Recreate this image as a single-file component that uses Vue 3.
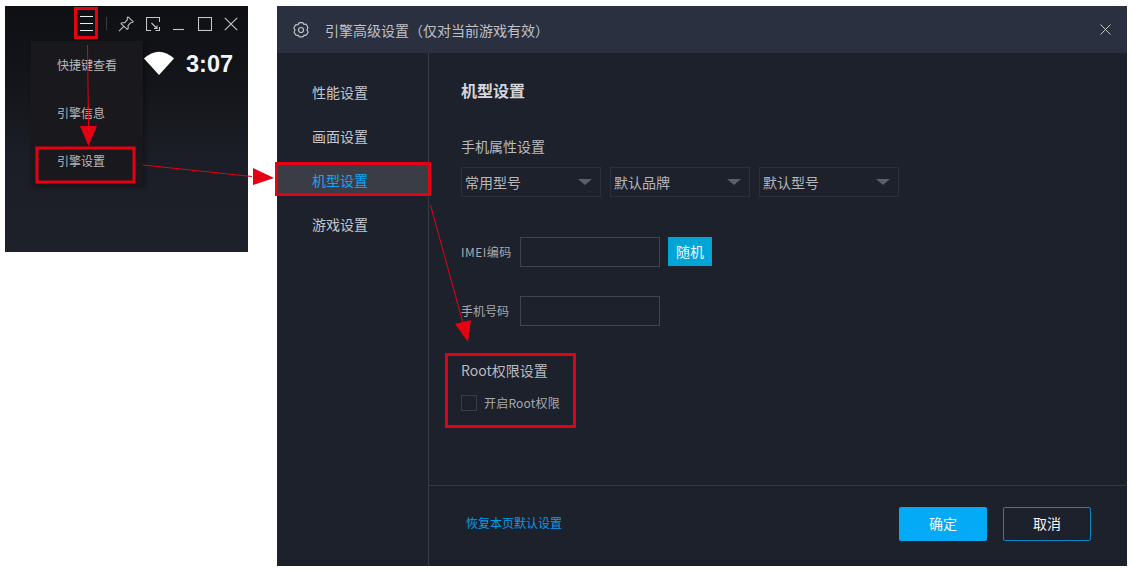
<script setup>
const navItems = ['性能设置', '画面设置', '机型设置', '游戏设置']
const selects = ['常用型号', '默认品牌', '默认型号']
const menu = ['快捷键查看', '引擎信息', '引擎设置']
</script>

<template>
  <div class="page">
    <section class="phone">
      <div class="toolbar">
        <div class="burger"><i></i><i></i><i></i></div>
        <span class="sep"></span>
        <svg class="ti pin" width="16" height="16" viewBox="0 0 16 16" fill="none" stroke="#bfc1c5" stroke-width="1.100" stroke-linejoin="round">
          <path d="M10 .8l5.200 4.800-.7.900-1.800.2-2.600 3 .1 2.700-1 1L3 7.600l1-.9 2.800-.1 2.600-3L9.200 1.700z" />
          <path d="M5.800 10.300L1 15.200" />
        </svg>
        <svg class="ti rs" width="14" height="14" viewBox="0 0 14 14" fill="none" stroke="#c4c6ca" stroke-width="1.100">
          <path d="M13.500 5V.5H.5v13h4.500 M9.500 13.500h4V10" />
          <path d="M5.500 6L11 11.500M11 8.500v3H8" />
        </svg>
        <svg class="ti mn" width="11" height="14" viewBox="0 0 11 14" fill="none" stroke="#c4c6ca" stroke-width="1.100">
          <path d="M0 12.500h11" />
        </svg>
        <svg class="ti mx" width="14" height="14" viewBox="0 0 14 14" fill="none" stroke="#c4c6ca" stroke-width="1.100">
          <rect x=".5" y=".5" width="13" height="13" />
        </svg>
        <svg class="ti" width="14" height="14" viewBox="0 0 14 14" fill="none" stroke="#c4c6ca" stroke-width="1.100">
          <path d="M.8.800l12.400 12.400M13.200.800L.8 13.200" />
        </svg>
      </div>
      <div class="phone-body">
        <ul class="menu">
          <li v-for="m in menu" :key="m">{{ m }}</li>
        </ul>
        <div class="status">
          <svg width="30" height="24" viewBox="0 0 30 24"><path d="M0 7.500Q15-6 30 7.500L15 24z" fill="#fff" /></svg>
          <span class="clock">3:07</span>
        </div>
      </div>
    </section>

    <section class="dialog">
      <header class="head">
        <svg width="18" height="18" viewBox="0 0 18 18" fill="none" stroke="#c3c5ca" stroke-width="1.200" stroke-linejoin="round">
          <path d="M6.600 2.500Q7 1.600 8 1.600h2q1 0 1.400.9l.4.800 1.300-.1q1-.1 1.500.8l1 1.800q.5.800-.1 1.600L15 9l.7 1.100q.6.800.1 1.600l-1 1.800q-.5.900-1.500.8l-1.300-.1-.4.800q-.4.900-1.400.9H8q-1 0-1.400-.9l-.4-.8-1.300.1q-1 .1-1.500-.8l-1-1.800q-.5-.8.100-1.600L3 9l-.7-1.100q-.6-.8-.1-1.600l1-1.800q.5-.9 1.500-.8l1.300.1z" />
          <circle cx="9" cy="9" r="2.500" />
        </svg>
        <span class="title">引擎高级设置（仅对当前游戏有效）</span>
        <svg class="x" width="11" height="11" viewBox="0 0 11 11" fill="none" stroke="#c3c5ca" stroke-width="1">
          <path d="M.5.500l10 10M10.500.500l-10 10" />
        </svg>
      </header>
      <div class="cols">
        <nav class="nav">
          <a v-for="n in navItems" :key="n" :class="{ active: n === '机型设置' }">{{ n }}</a>
        </nav>
        <div class="main">
          <div class="content">
            <h2>机型设置</h2>
            <h3>手机属性设置</h3>
            <div class="selects">
              <div v-for="s in selects" :key="s" class="select">
                <span>{{ s }}</span><b class="caret"></b>
              </div>
            </div>
            <div class="field first">
              <label class="imei">IMEI编码</label><span class="input"></span><button class="random">随机</button>
            </div>
            <div class="field second">
              <label>手机号码</label><span class="input"></span>
            </div>
            <h3 class="root">Root权限设置</h3>
            <div class="check"><span class="box"></span><span>开启Root权限</span></div>
          </div>
          <footer class="foot">
            <a class="reset">恢复本页默认设置</a>
            <button class="ok">确定</button>
            <button class="cancel">取消</button>
          </footer>
        </div>
      </div>
    </section>

    <svg class="marks" width="1132" height="571" viewBox="0 0 1132 571" fill="none" stroke="#e60014">
      <g stroke-width="3">
        <rect x="75.500" y="8.500" width="21" height="29" />
        <rect x="37" y="148" width="97" height="34" />
        <rect x="276.500" y="163.500" width="153" height="31" />
        <rect x="446.500" y="354.500" width="128" height="72" />
      </g>
      <g stroke-width="1">
        <path d="M87.500 45L88.500 126" />
        <path d="M143 165L252 176.500" />
        <path d="M430.500 205L463 323" />
      </g>
      <g fill="#e60014" stroke="none">
        <path d="M80 126H97L88.500 146z" />
        <path d="M253 168L274 178 253 185z" />
        <path d="M455 324L471 320 468 342z" />
      </g>
    </svg>
  </div>
</template>

<style scoped>
.page {
  position: relative;
  width: 1132px;
  height: 571px;
  box-sizing: border-box;
  padding: 6px 0 0 5px;
  display: flex;
  align-items: flex-start;
  gap: 29px;
  overflow: hidden;
  background: #fff;
  font-family: "Noto Sans CJK SC", "Liberation Sans", sans-serif;
}
.phone {
  width: 243px;
  height: 246px;
  flex: none;
  display: flex;
  flex-direction: column;
  background: linear-gradient(180deg, #0f1014 0%, #14151a 32%, #1b1e26 62%, #1e212a 100%);
}
.toolbar {
  height: 35px;
  padding-left: 70px;
  display: flex;
  align-items: center;
}
.burger {
  width: 13px;
  margin: 0 5px;
  display: flex;
  flex-direction: column;
  gap: 6px;
}
.burger i { display: block; height: 1px; background: #eceef0; }
.sep { width: 1px; height: 13px; margin: 0 11px 0 8px; background: #3a3c42; }
.ti { flex: none; }
.pin { margin-right: 12px; }
.rs { margin-right: 13px; }
.mn { margin-right: 14px; }
.mx { margin-right: 12px; }
.phone-body { display: flex; align-items: flex-start; padding-left: 26px; }
.menu {
  width: 112px;
  height: 144px;
  margin: 0;
  padding: 0 0 0 26px;
  box-sizing: border-box;
  list-style: none;
  background: #18181d;
  box-shadow: 2px 2px 4px rgba(0, 0, 0, .35);
  color: #b8b8bb;
  font-size: 12px;
}
.menu li { height: 48px; line-height: 48px; }
.status { margin: 9px 0 0 1px; display: flex; align-items: center; gap: 12px; }
.clock {
  margin-top: 2px;
  color: #f4f4f4;
  font: bold 23.500px/24px "Liberation Sans", sans-serif;
}
.dialog {
  width: 850px;
  height: 560px;
  flex: none;
  display: flex;
  flex-direction: column;
  background: #1d212c;
  color: #b9bbc0;
}
.head {
  height: 47px;
  flex: none;
  padding: 0 16px 0 15px;
  display: flex;
  align-items: center;
  background: #2a3040;
}
.title { margin-left: 15px; font-size: 14px; color: #bfc1c6; flex: 1; }
.cols { flex: 1; display: flex; min-height: 0; }
.nav {
  width: 152px;
  flex: none;
  box-sizing: border-box;
  padding-top: 22px;
  border-right: 1px solid #363a45;
  display: flex;
  flex-direction: column;
  gap: 12px;
}
.nav a {
  height: 32px;
  padding: 1px 0 0 35px;
  box-sizing: border-box;
  font-size: 14px;
  line-height: 32px;
  color: #c4c6cb;
}
.nav a.active {
  padding-left: 34px;
  background: #3a3d46;
  border-left: 1px solid #0aa5e8;
  color: #13a6f0;
}
.main { flex: 1; display: flex; flex-direction: column; min-width: 0; }
.content { flex: 1; padding: 26px 0 0 32px; }
h2 { margin: 0; font-size: 16px; line-height: 22px; font-weight: 700; color: #d5d6da; }
h3 { margin: 0; font-size: 14px; line-height: 20px; font-weight: 400; color: #b9bbc0; }
h2 + h3 { margin-top: 35px; }
.selects { margin-top: 11px; display: flex; gap: 9px; }
.select {
  width: 140px;
  height: 30px;
  box-sizing: border-box;
  padding: 0 8px 0 3px;
  border: 1px solid #2b3040;
  display: flex;
  align-items: center;
  justify-content: space-between;
  font-size: 14px;
  color: #b4b6bb;
}
.caret {
  width: 0;
  height: 0;
  border-left: 7px solid transparent;
  border-right: 7px solid transparent;
  border-top: 6px solid #5c5f66;
}
.field { display: flex; align-items: center; font-size: 12px; color: #a7a9ae; }
.field.first { margin-top: 40px; }
.field.second { margin-top: 29px; }
.field label { width: 59px; flex: none; padding-bottom: 2px; }
.field label.imei { letter-spacing: .5px; }
.input {
  width: 140px;
  height: 30px;
  box-sizing: border-box;
  border: 1px solid #41434d;
}
.random {
  width: 44px;
  height: 29px;
  margin: 0 0 1px 8px;
  padding: 0 0 2px;
  border: 0;
  background: #00a5d8;
  color: #f2fafd;
  font: 14px "Noto Sans CJK SC", sans-serif;
}
.root { margin-top: 34px; }
.check { margin-top: 14px; display: flex; align-items: center; gap: 7px; font-size: 12px; letter-spacing: .2px; color: #a7a9ae; }
.box { width: 16px; height: 16px; box-sizing: border-box; border: 1px solid #3a3d47; }
.foot {
  height: 81px;
  flex: none;
  box-sizing: border-box;
  padding: 0 36px 5px 37px;
  border-top: 1px solid #373a44;
  display: flex;
  align-items: center;
}
.reset { flex: 1; padding-bottom: 2px; font-size: 12px; color: #0a9be4; }
.foot button {
  width: 88px;
  height: 34px;
  padding: 0 0 2px;
  border-radius: 2px;
  font: 14px "Noto Sans CJK SC", sans-serif;
  color: #f4f6f8;
}
.ok { border: 0; background: #04aaf6; }
.cancel { margin-left: 16px; background: transparent; border: 1px solid #0f86c8; }
.marks { position: absolute; left: 0; top: 0; pointer-events: none; }
</style>
